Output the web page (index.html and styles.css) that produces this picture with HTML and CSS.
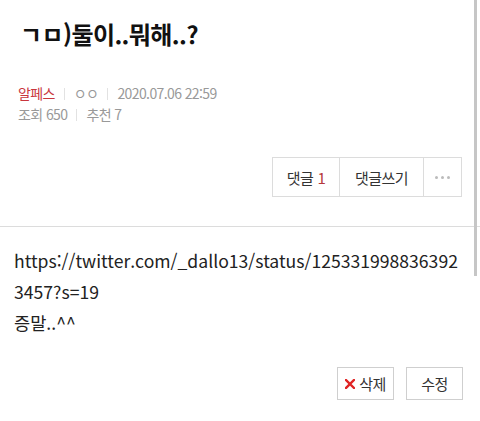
FILE: index.html
```html
<!DOCTYPE html>
<html lang="ko">
<head>
<meta charset="utf-8">
<title>post</title>
<link rel="stylesheet" href="styles.css">
</head>
<body>
<div class="page">
  <header class="post-head">
    <h1 class="title">ㄱㅁ)둘이..뭐해..?</h1>
    <div class="meta">
      <div class="meta-row">
        <span class="cat">알페스</span><span class="sep"></span><span>ㅇㅇ</span><span class="sep"></span><span>2020.07.06 22:59</span>
      </div>
      <div class="meta-row">
        <span>조회 650</span><span class="sep"></span><span>추천 7</span>
      </div>
    </div>
    <div class="actions">
      <div class="btn-group">
        <span class="btn btn-c1">댓글 <em class="count">1</em></span>
        <span class="btn btn-c2">댓글쓰기</span>
        <span class="btn btn-more"><i></i><i></i><i></i></span>
      </div>
    </div>
  </header>
  <div class="content">
    <p>https://twitter.com/_dallo13/status/1253319988363923457?s=19</p>
    <p>증말..^^</p>
  </div>
  <div class="bottom-actions">
    <span class="btn small"><svg class="x" width="10" height="10" viewBox="0 0 10 10"><path d="M1 1L9 9M9 1L1 9" stroke="#e02424" stroke-width="2.4" stroke-linecap="square"/></svg>삭제</span>
    <span class="btn small">수정</span>
  </div>
  <div class="scrollbar"></div>
</div>
</body>
</html>
```
FILE: styles.css
```css
* { box-sizing: border-box; }
html, body { margin: 0; padding: 0; background: #fff; }
body { font-family: "Noto Sans CJK KR", "Noto Sans", sans-serif; color: #222; }
.page { position: relative; width: 480px; height: 421px; overflow: hidden; }
.post-head { padding: 18px 18px 29px 20px; border-bottom: 1px solid #dcdcdc; }
.title { margin: 0; font-size: 24px; font-weight: 700; line-height: 32px; letter-spacing: -0.6px; color: #111; }
.meta { margin-top: 33px; font-size: 14px; color: #999; letter-spacing: -0.6px; line-height: 21px; }
.meta-row { display: flex; align-items: center; margin-left: -2px; }
.cat { color: #c9363d; }
.sep { display: inline-block; width: 1px; height: 12px; background: #e2e2e2; margin: 0 9px; }
.actions { display: flex; justify-content: flex-end; margin-top: 32px; }
.btn-group { display: flex; border: 1px solid #dcdcdc; height: 40px; }
.btn { display: flex; align-items: center; justify-content: center; font-size: 15px; color: #333; letter-spacing: -0.5px; }
.btn-group .btn + .btn { border-left: 1px solid #dcdcdc; }
.btn-c1 { width: 66px; }
.btn-c2 { width: 84px; }
.btn-more { width: 38px; gap: 3px; }
.btn-more i { display: block; width: 3px; height: 3px; border-radius: 50%; background: #bbb; }
.count { font-style: normal; color: #b5383b; margin-left: 4px; }
.content { padding: 18px 14px 0 14px; font-size: 17.6px; line-height: 31px; color: #222; letter-spacing: 0; }
.content p { margin: 0; word-break: break-all; }
.bottom-actions { display: flex; justify-content: flex-end; gap: 12px; padding: 29px 17px 0 0; }
.btn.small { width: 57px; height: 33px; border: 1px solid #cfcfcf; font-size: 15px; gap: 4px; }
.x { display: block; }
.scrollbar { position: absolute; top: 0; right: 3px; width: 3px; height: 276px; background: #c6c6c6; }
```
